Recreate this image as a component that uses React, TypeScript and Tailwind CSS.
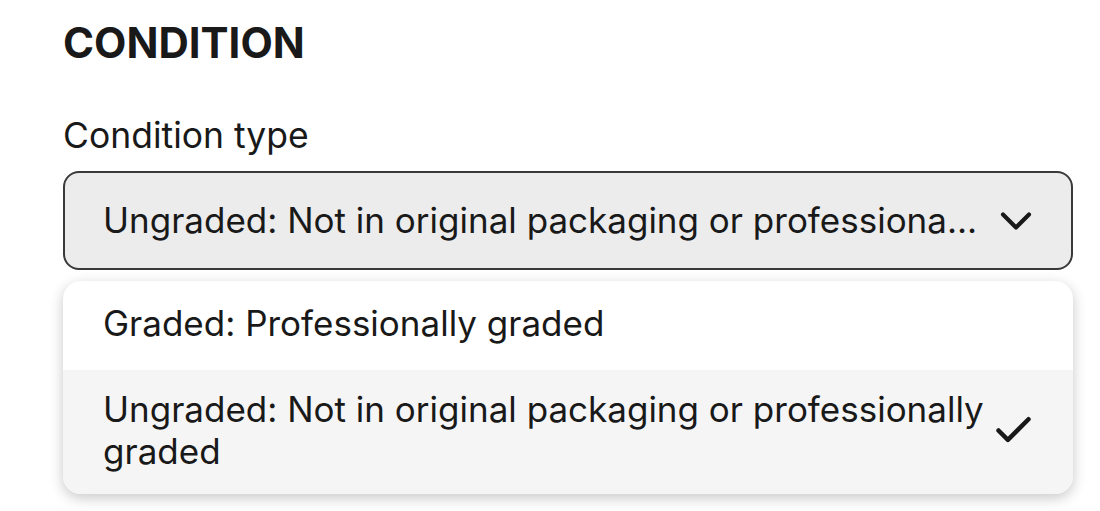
import { Check, ChevronDown } from "lucide-react";

const FONT = "font-['Inter',sans-serif]";

export default function App() {
  return (
    <div className={`${FONT} min-h-[511px] w-[1100px] bg-white text-[#191919]`}>
      <div className="pl-[63px] pr-[27px] pt-[19px]">
        <h2 className="text-[42px] font-bold leading-[48px]">CONDITION</h2>

        <label className="mt-[47px] block text-[35.5px] leading-[44px]">Condition type</label>

        <button className="mt-[13px] flex h-[99px] w-full items-center justify-between rounded-[16px] border-2 border-[#3a3a3a] bg-[#ececec] pl-[38px] pr-[29px] text-left">
          <span className="truncate text-[35px]">
            Ungraded: Not in original packaging or professiona...
          </span>
          <ChevronDown className="h-[52px] w-[52px] shrink-0" strokeWidth={1.9} />
        </button>

        <div className="mt-[11px] overflow-hidden rounded-[18px] bg-white shadow-[0_4px_14px_rgba(0,0,0,0.22)]">
          <div className="flex h-[89px] items-center pb-[4px] pl-[40px] pr-[40px] text-[35px]">
            Graded: Professionally graded
          </div>
          <div className="flex items-center justify-between gap-1 bg-[#f5f5f5] pb-[22px] pt-[18px] pl-[40px] pr-[37px]">
            <span className="flex-1 text-[35px] leading-[42px]">
              Ungraded: Not in original packaging or professionally graded
            </span>
            <Check className="h-[45px] w-[45px] shrink-0" strokeWidth={2.4} />
          </div>
        </div>
      </div>
    </div>
  );
}
